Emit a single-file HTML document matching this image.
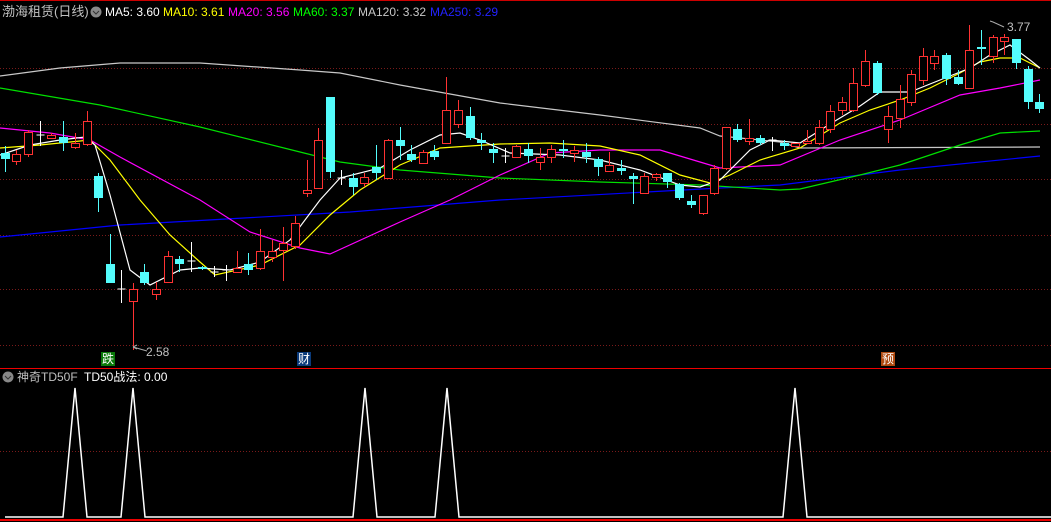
<!DOCTYPE html>
<html><head><meta charset="utf-8"><style>
html,body{margin:0;padding:0;background:#000;width:1051px;height:522px;overflow:hidden;font-family:"Liberation Sans","Noto Sans CJK SC",sans-serif}
svg{position:absolute;left:0;top:0}
.t{position:absolute;font-size:12px;white-space:nowrap;line-height:14px}
#c{shape-rendering:crispEdges}
</style></head><body>
<svg width="1051" height="522" viewBox="0 0 1051 522">
<line x1="0" y1="0.5" x2="1051" y2="0.5" stroke="#c00" />
<g stroke="#7a1a1a" stroke-dasharray="1,2">
<line x1="0" y1="68.5" x2="1051" y2="68.5"/><line x1="0" y1="124.5" x2="1051" y2="124.5"/>
<line x1="0" y1="179.5" x2="1051" y2="179.5"/><line x1="0" y1="235.5" x2="1051" y2="235.5"/>
<line x1="0" y1="289.5" x2="1051" y2="289.5"/><line x1="0" y1="345.5" x2="1051" y2="345.5"/>
<line x1="0" y1="451.5" x2="1051" y2="451.5"/>
</g>
<line x1="0" y1="368.5" x2="1051" y2="368.5" stroke="#e00" />
<line x1="0" y1="520" x2="1051" y2="520" stroke="#e00" stroke-width="2"/>
<g fill="none" stroke-width="1.2">
<polyline stroke="#0000ff" points="0,237 120,225 350,212 500,200 720,188 780,185 900,170 1040,156"/>
<polyline stroke="#c8c8c8" points="0,76 60,68 120,63 200,63 300,70 340,73 400,85 500,103 600,115 700,128 720,136 760,140 780,142 800,148 1040,147"/>
<polyline stroke="#00e000" points="0,88 100,105 200,127 300,152 340,162 400,170 500,178 600,182 700,185 780,190 800,189 860,175 900,165 960,145 1000,133 1040,131"/>
<polyline stroke="#ff00ff" points="0,128 50,133 90,140 120,157 200,200 250,232 300,248 330,254 400,222 450,200 500,175 550,153 600,150 660,150 700,162 720,168 780,165 840,140 900,120 960,95 1000,88 1040,80"/>
<polyline stroke="#ffff00" points="0,148 40,145 90,140 110,160 140,200 170,235 200,262 215,275 260,265 300,245 330,215 360,190 400,165 440,148 500,144 550,143 600,146 640,155 680,175 710,183 730,175 760,160 800,148 840,123 870,110 900,100 930,88 960,73 980,62 1000,58 1020,58 1040,68"/>
<polyline stroke="#ffffff" points="0,155 30,145 60,140 85,137 95,145 110,195 130,270 150,285 180,270 200,268 230,270 260,262 290,240 320,200 340,178 380,168 410,150 440,135 460,133 480,140 510,153 560,155 600,160 640,170 680,185 700,187 720,180 750,150 770,140 800,143 830,124 860,106 880,92 910,92 940,80 970,68 990,55 1010,45 1030,60 1040,68"/>
</g>
<g id="c"></g>
<g stroke="#fff" fill="none" stroke-width="1.5">
<polyline points="5,517 63,517 75,388 87,517 121,517 133,388 145,517 353,517 365,388 377,517 435,517 447,388 459,517 783,517 795,388 807,517 1051,517"/>
</g>
<g stroke="#aaa" fill="none"><path d="M133,347 L147,351 M133,347 l4,-2 M133,347 l4,2"/><path d="M993,22 l-3,-1 M993,22 L1004,27"/></g>
<text x="146" y="356" fill="#c0c0c0" font-size="12" font-family="Liberation Sans">2.58</text>
<text x="1007" y="31" fill="#c0c0c0" font-size="12" font-family="Liberation Sans">3.77</text>
<rect x="101" y="352" width="14" height="14" fill="#0a7a0a"/>
<rect x="297" y="352" width="14" height="14" fill="#0a3a7a"/>
<rect x="881" y="352" width="14" height="14" fill="#b04a10"/>
<circle cx="96" cy="12" r="5.5" fill="#888"/><path d="M93,11 l3,3 l3,-3" stroke="#333" fill="none"/>
<circle cx="8" cy="377" r="5.5" fill="#888"/><path d="M5,376 l3,3 l3,-3" stroke="#333" fill="none"/>
</svg>
<div class="t" style="left:2px;top:5px;color:#c0c0c0;font-size:13px">渤海租赁(日线)</div>
<div class="t" style="left:105px;top:5px;color:#fff">MA5: 3.60</div>
<div class="t" style="left:163px;top:5px;color:#ff0">MA10: 3.61</div>
<div class="t" style="left:228px;top:5px;color:#f0f">MA20: 3.56</div>
<div class="t" style="left:293px;top:5px;color:#0f0">MA60: 3.37</div>
<div class="t" style="left:358px;top:5px;color:#c8c8c8">MA120: 3.32</div>
<div class="t" style="left:430px;top:5px;color:#22f">MA250: 3.29</div>
<div class="t" style="left:102px;top:352px;color:#fff;font-size:12px">跌</div>
<div class="t" style="left:298px;top:352px;color:#fff;font-size:12px">财</div>
<div class="t" style="left:882px;top:352px;color:#fff;font-size:12px">预</div>
<div class="t" style="left:17px;top:370px;color:#c0c0c0;font-size:12px">神奇TD50F</div>
<div class="t" style="left:84px;top:370px;color:#fff;font-size:12px">TD50战法: 0.00</div>
<script>
var d=[[5,'C',153,159,146,172],[16,'R',154,161,150,165],[28,'R',132,154,130,157],[40,'W',135,135,121,146],[51,'R',135,138,133,139],[63,'C',137,143,121,151],[75,'R',143,147,133,149],[87,'R',121,144,111,146],[98,'C',176,198,173,212],[110,'C',264,283,234,283],[121,'W',289,289,270,303],[133,'R',289,301,283,350],[144,'C',272,283,264,285],[156,'R',289,294,282,300],[168,'R',256,282,251,283],[179,'C',259,264,256,272],[191,'W',261,261,242,272],[202,'C',267,269,266,270],[214,'W',272,272,266,277],[226,'W',270,270,265,281],[237,'R',268,272,251,272],[248,'C',264,270,253,275],[260,'R',251,268,229,270],[272,'R',251,257,240,262],[283,'R',243,250,227,281],[295,'R',223,246,216,249],[307,'R',190,193,160,197],[318,'R',140,188,128,189],[330,'C',97,172,97,178],[341,'W',178,178,170,185],[353,'C',178,187,173,195],[364,'R',177,183,173,187],[376,'C',167,173,145,180],[388,'R',140,178,139,179],[400,'C',140,146,127,160],[411,'C',154,160,145,162],[423,'R',152,163,150,163],[434,'C',151,157,145,160],[446,'R',110,143,77,143],[458,'R',110,124,100,128],[470,'C',116,138,107,140],[481,'C',140,143,133,150],[493,'C',149,153,143,163],[505,'W',156,156,148,163],[516,'R',146,157,145,157],[528,'C',149,156,143,163],[540,'R',157,162,148,170],[551,'R',149,157,145,163],[563,'C',149,151,140,158],[574,'R',150,153,146,162],[586,'C',152,157,143,163],[598,'C',159,167,157,176],[609,'R',165,171,152,172],[621,'C',168,171,160,175],[633,'C',176,179,173,204],[644,'R',176,193,173,193],[656,'R',174,177,173,181],[667,'C',173,182,173,188],[679,'C',184,198,183,200],[691,'C',201,205,195,208],[703,'R',195,213,195,215],[714,'R',168,193,165,195],[726,'R',127,168,127,170],[737,'C',129,140,124,142],[749,'R',138,141,119,145],[760,'C',138,143,135,145],[772,'W',140,140,137,151],[784,'C',143,146,140,150],[795,'R',143,146,143,146],[807,'R',141,143,130,143],[819,'R',127,143,120,145],[830,'R',111,129,105,133],[842,'R',102,110,97,115],[853,'R',83,110,68,112],[865,'R',61,85,50,87],[877,'C',63,93,61,95],[888,'R',116,129,106,143],[900,'R',99,118,85,128],[911,'R',74,102,70,106],[923,'R',56,80,48,85],[934,'R',56,63,50,70],[946,'C',55,79,53,85],[958,'C',77,84,70,85],[969,'R',50,88,25,88],[981,'C',47,49,30,65],[993,'R',37,56,35,63],[1004,'R',37,41,34,55],[1016,'C',39,63,39,69],[1028,'C',69,102,66,109],[1039,'C',102,109,94,113]];
var s='';
d.forEach(function(a){var x=a[0]+.5,t=a[1];
if(t=='W'){s+='<line x1="'+x+'" y1="'+a[4]+'" x2="'+x+'" y2="'+a[5]+'" stroke="#fff"/><line x1="'+(x-4)+'" y1="'+a[2]+'" x2="'+(x+4)+'" y2="'+a[2]+'" stroke="#fff"/>';return;}
var col=t=='R'?'#ff3232':'#54fcfc';
s+='<line x1="'+x+'" y1="'+a[4]+'" x2="'+x+'" y2="'+a[5]+'" stroke="'+col+'"/>';
var h=Math.max(a[3]-a[2],2);
if(t=='R')s+='<rect x="'+(x-4)+'" y="'+(a[2]+.5)+'" width="8" height="'+h+'" fill="#000" stroke="'+col+'" stroke-width="1.3"/>';
else s+='<rect x="'+(x-4.5)+'" y="'+a[2]+'" width="9" height="'+h+'" fill="'+col+'"/>';});
document.getElementById('c').innerHTML=s;
</script>
</body></html>
